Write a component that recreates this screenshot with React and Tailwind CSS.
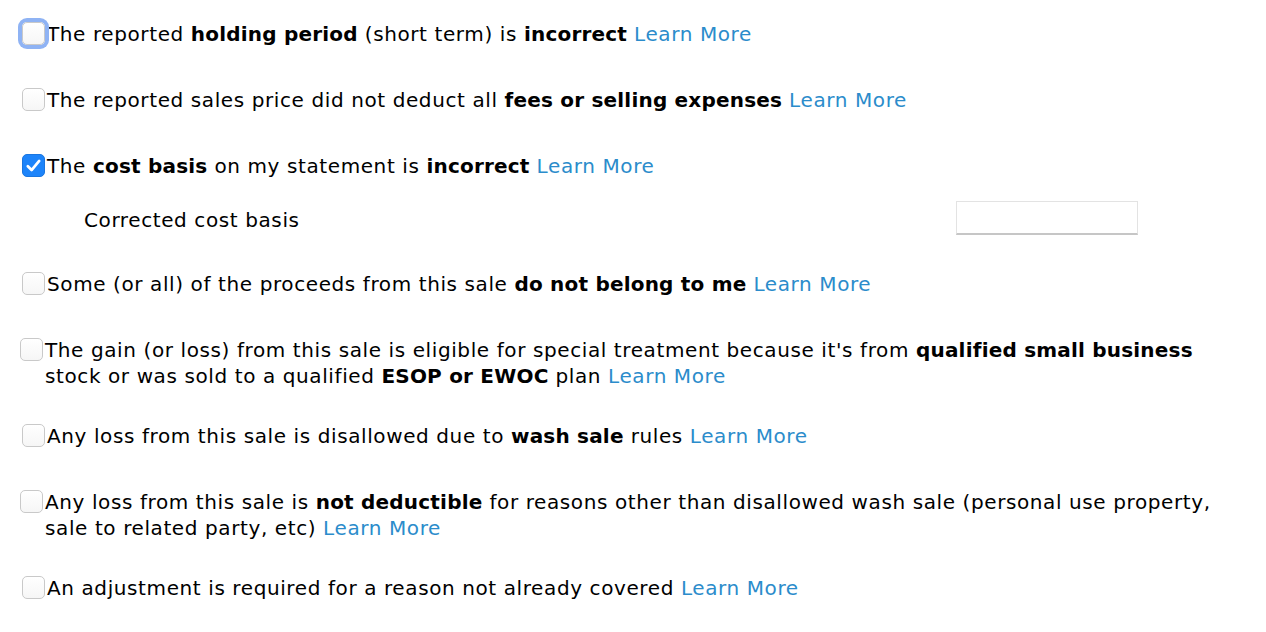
import React, { useState } from "react";

const Box = ({ checked, focused, onChange, className = "" }) => (
  <button
    type="button"
    onClick={onChange}
    className={`relative shrink-0 w-[23px] h-[23px] rounded-[5px] flex items-center justify-center ${
      checked
        ? "bg-[#1d84fa] border border-[#1a76e0]"
        : "bg-gradient-to-b from-white to-[#f6f6f6] border border-[#c9c9c9]"
    } ${focused ? "ring-[4px] ring-[#8fb3f4]" : ""} ${className}`}
  >
    {checked && (
      <svg width="19" height="19" viewBox="0 0 16 16" fill="none">
        <path
          d="M3.2 8.6 L6.4 11.8 L12.8 4.2"
          stroke="white"
          strokeWidth="2.3"
          strokeLinecap="round"
          strokeLinejoin="round"
        />
      </svg>
    )}
  </button>
);

const Link = () => <span className="text-[#2b8ccb]">Learn More</span>;

const B = ({ children }) => <b className="tracking-[0.2px]">{children}</b>;

const Row = ({ checked, focused, onToggle, className = "", boxClass = "", children }) => (
  <div className={`flex items-start ${className}`}>
    <Box checked={checked} focused={focused} onChange={onToggle} className={`mt-[1px] ${boxClass}`} />
    <div className="ml-[2px]">{children}</div>
  </div>
);

export default function App() {
  const [checks, setChecks] = useState([false, false, true, false, false, false, false, false]);
  const toggle = (i) => () =>
    setChecks((c) => c.map((v, j) => (j === i ? !v : v)));

  return (
    <div
      className="w-[1266px] h-[632px] bg-white text-black text-[20px] leading-[26px] tracking-[0.6px] pt-[21px] pl-[22px] overflow-hidden"
      style={{ fontFamily: '"DejaVu Sans", Verdana, sans-serif' }}
    >
      <div className="flex flex-col">
        <Row checked={checks[0]} focused onToggle={toggle(0)}>
          The reported <B>holding period</B> (short term) is <B>incorrect</B> <Link />
        </Row>

        <Row checked={checks[1]} onToggle={toggle(1)} className="mt-[40px]">
          The reported sales price did not deduct all <B>fees or selling expenses</B> <Link />
        </Row>

        <Row checked={checks[2]} onToggle={toggle(2)} className="mt-[40px]">
          The <B>cost basis</B> on my statement is <B>incorrect</B> <Link />
        </Row>

        <div className="flex items-center mt-[22px] h-[34px]">
          <span className="ml-[62px] w-[872px] pt-[4px]">Corrected cost basis</span>
          <input
            type="text"
            className="w-[182px] h-[34px] bg-white border border-[#e3e3e3] border-b-[#c6c6c6] border-b-2 outline-none"
          />
        </div>

        <Row checked={checks[3]} onToggle={toggle(3)} className="mt-[36px]">
          Some (or all) of the proceeds from this sale <B>do not belong to me</B> <Link />
        </Row>

        <Row checked={checks[4]} onToggle={toggle(4)} className="mt-[40px]" boxClass="-ml-[2px]">
          The gain (or loss) from this sale is eligible for special treatment because it's from{" "}
          <B>qualified small business</B>
          <br />
          stock or was sold to a qualified <B>ESOP or EWOC</B> plan <Link />
        </Row>

        <Row checked={checks[5]} onToggle={toggle(5)} className="mt-[34px]">
          Any loss from this sale is disallowed due to <B>wash sale</B> rules <Link />
        </Row>

        <Row checked={checks[6]} onToggle={toggle(6)} className="mt-[40px]" boxClass="-ml-[2px]">
          Any loss from this sale is <B>not deductible</B> for reasons other than disallowed wash sale (personal use property,
          <br />
          sale to related party, etc) <Link />
        </Row>

        <Row checked={checks[7]} onToggle={toggle(7)} className="mt-[34px]">
          An adjustment is required for a reason not already covered <Link />
        </Row>
      </div>
    </div>
  );
}
